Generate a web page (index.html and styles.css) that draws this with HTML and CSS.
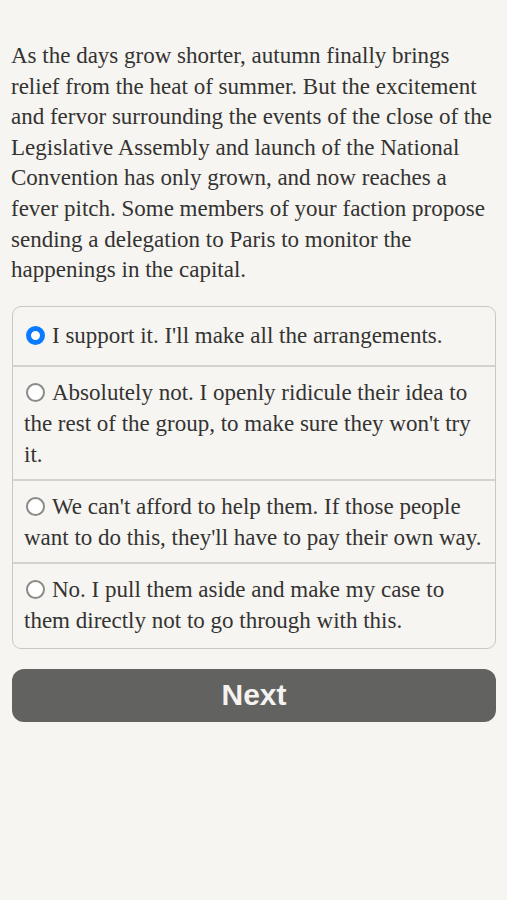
FILE: index.html
```html
<!DOCTYPE html>
<html lang="en">

<head>
    <meta charset="UTF-8">
    <meta name="viewport" content="width=device-width, initial-scale=1.0">
    <title>Choice</title>
    <link rel="stylesheet" href="styles.css">
</head>

<body>
    <div class="page">
        <p class="story">As the days grow shorter, autumn finally brings relief from the heat of summer. But the excitement and fervor surrounding the events of the close of the Legislative Assembly and launch of the National Convention has only grown, and now reaches a fever pitch. Some members of your faction propose sending a delegation to Paris to monitor the happenings in the capital.</p>

        <div class="choices">
            <label class="choice">
                <span class="radio checked"></span>I support it. I'll make all the arrangements.
            </label>
            <label class="choice">
                <span class="radio"></span>Absolutely not. I openly ridicule their idea to the rest of the group, to make sure they won't try it.
            </label>
            <label class="choice">
                <span class="radio"></span>We can't afford to help them. If those people want to do this, they'll have to pay their own way.
            </label>
            <label class="choice">
                <span class="radio"></span>No. I pull them aside and make my case to them directly not to go through with this.
            </label>
        </div>

        <button class="next">Next</button>
    </div>
</body>

</html>
```

FILE: styles.css
```css
* {
    margin: 0;
    padding: 0;
    box-sizing: border-box;
}

body {
    background-color: #f7f5f1;
    color: #333331;
    font-family: "Liberation Serif", "DejaVu Serif", serif;
}

.page {
    padding: 41px 11px 0 11px;
}

.story {
    font-size: 23px;
    line-height: 30.6px;
}

.choices {
    margin: 20px 0 0 1px;
    border: 1px solid #c9c8c5;
    border-radius: 9px;
    overflow: hidden;
}

.choice {
    display: block;
    font-size: 23px;
    line-height: 30.6px;
    padding: 11px 10px 9px 11px;
    border-top: 2px solid #d3d2cf;
}

.choice:first-child {
    border-top: none;
    padding: 14px 10px 14px 11px;
}

.choice:last-child {
    padding-bottom: 11px;
}

.radio {
    display: inline-block;
    width: 19px;
    height: 19px;
    margin: 0 7px 0 2px;
    border-radius: 50%;
    border: 2px solid #8a8a88;
    background-color: #fff;
    vertical-align: -2px;
}

.radio.checked {
    border: 5px solid #0a7aff;
}

.next {
    display: block;
    width: 484px;
    height: 53px;
    margin: 20px 0 0 1px;
    border: none;
    border-radius: 12px;
    background-color: #626260;
    color: #f4f3f0;
    font-family: "Liberation Sans", Arial, sans-serif;
    font-weight: bold;
    font-size: 30px;
    cursor: pointer;
}
```
